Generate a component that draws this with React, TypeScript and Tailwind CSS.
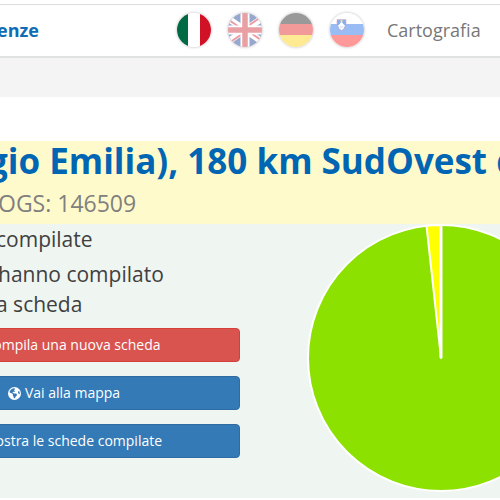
import { ReactNode } from "react";
import { FaEarthAmericas, FaPlus, FaList } from "react-icons/fa6";

const ItalyFlag = () => (
  <svg viewBox="0 0 34 34" className="h-full w-full">
    <rect width="34" height="34" fill="#fff" />
    <rect width="11" height="34" fill="#006a45" />
    <rect x="23" width="11" height="34" fill="#d01126" />
  </svg>
);

const UkFlag = () => (
  <svg viewBox="0 0 34 34" className="h-full w-full">
    <rect width="34" height="34" fill="#98a7cd" />
    <path d="M-5 2 39 32M39 2 -5 32" stroke="#fff" strokeWidth="6.500" />
    <path d="M17 18 -5 3M17 15 39 0M17 16 39 31M17 19 -5 34" stroke="#ec9aa0" strokeWidth="2" />
    <path d="M17 0V34M0 17H34" stroke="#fff" strokeWidth="9" />
    <path d="M17 0V34M0 17H34" stroke="#e9a0a5" strokeWidth="5.500" />
  </svg>
);

const GermanyFlag = () => (
  <svg viewBox="0 0 34 34" className="h-full w-full">
    <rect width="34" height="12" fill="#999" />
    <rect y="11" width="34" height="12" fill="#f29a9a" />
    <rect y="22" width="34" height="12" fill="#ffea94" />
  </svg>
);

const SloveniaFlag = () => (
  <svg viewBox="0 0 34 34" className="h-full w-full">
    <rect width="34" height="34" fill="#fff" />
    <rect y="11" width="34" height="12" fill="#99bcf5" />
    <rect y="22" width="34" height="12" fill="#ff9999" />
    <path d="M7 6.500h9v5c0 3-1.800 5.200-4.500 6.300C8.800 16.700 7 14.500 7 11.500z" fill="#86aef0" stroke="#e3a9bd" strokeWidth=".6" />
    <path d="M8 12.500 9.700 11 11.500 8.500 13.300 11 15 12.500 13.800 15.500 11.500 17.200 9.200 15.500z" fill="#fff" />
    <circle cx="11.500" cy="8" r="1.200" fill="#e6dfa0" />
    <path d="M9.500 14h4" stroke="#99bcf5" strokeWidth=".6" />
  </svg>
);

const flags = [
  { name: "Italiano", icon: <ItalyFlag /> },
  { name: "English", icon: <UkFlag /> },
  { name: "Deutsch", icon: <GermanyFlag /> },
  { name: "Slovenščina", icon: <SloveniaFlag /> },
];

const ActionButton = ({ color, icon, children }: { color: string; icon: ReactNode; children: ReactNode }) => (
  <button
    type="button"
    className={`flex w-full items-center justify-center gap-1 rounded-sm border py-1.5 text-sm leading-5 text-white ${color}`}
  >
    {icon}
    {children}
  </button>
);

const Header = () => (
  <header className="mt-1 border-t border-b-2 border-t-[#dddddd] border-b-[#dfe2e0] bg-white">
    <nav className="flex min-h-[51px] items-start pt-2 text-lg leading-[34px] whitespace-nowrap">
      <a href="#" className="-ml-[3px] w-[180px] shrink-0 font-bold text-[#0f6cb5]">enze</a>
      <div className="flex shrink-0 gap-[17px]">
        {flags.map((flag) => (
          <button
            key={flag.name}
            type="button"
            aria-label={flag.name}
            className="size-[34px] overflow-hidden rounded-full shadow-[0_0_3px_rgba(0,0,0,0.3)]"
          >
            {flag.icon}
          </button>
        ))}
      </div>
      <a href="#" className="ml-[23px] text-[#777777]">Cartografia</a>
    </nav>
  </header>
);

const PieChart = () => (
  <svg viewBox="0 0 268 268" className="size-[268px] shrink-0" role="img" aria-label="Schede compilate">
    <circle cx="134" cy="134" r="133" fill="#8ce100" stroke="#fff" strokeWidth="2" />
    <path d="M134 134V1A133 133 0 0 0 119.500 1.800Z" fill="#ffff00" stroke="#fff" strokeWidth="2" strokeLinejoin="round" />
    <path d="M134 134V1" stroke="#fff" strokeWidth="3" />
  </svg>
);

export default function App() {
  return (
    <div className="min-h-screen overflow-hidden bg-white font-['Open_Sans',sans-serif]">
      <Header />
      <div className="h-[39px] bg-[#f4f4f4]" />

      <main className="pt-11">
        {/* Event title */}
        <div className="bg-[#fffacb] pb-1.5 whitespace-nowrap">
          <h1 className="-ml-3 text-[35px] leading-10 font-bold text-[#0066b3]">gio Emilia), 180 km SudOvest da</h1>
          <p className="-ml-0.5 pt-[7px] text-[23px] leading-[30px] text-[#808080]">OGS: 146509</p>
        </div>

        <section className="flex bg-[#eff5f0] pb-10">
          <div className="w-60 shrink-0">
            <div className="text-[21px] leading-[30px] text-[#404040]">
              <p className="-ml-1 pb-[5px]">compilate</p>
              <p className="-ml-0.5">hanno compilato</p>
              <p className="-ml-1">a scheda</p>
            </div>
            <div className="-ml-28 flex flex-col gap-3.5 pt-[9px]">
              <ActionButton color="border-[#d43f3a] bg-[#d9534f]" icon={<FaPlus size={13} />}>Compila una nuova scheda</ActionButton>
              <ActionButton color="border-[#2e6da4] bg-[#337ab7]" icon={<FaEarthAmericas size={13} />}>Vai alla mappa</ActionButton>
              <ActionButton color="border-[#2e6da4] bg-[#337ab7]" icon={<FaList size={13} />}>Mostra le schede compilate</ActionButton>
            </div>
          </div>
          <div className="-mb-10 ml-[67px]">
            <PieChart />
          </div>
        </section>
      </main>
    </div>
  );
}
